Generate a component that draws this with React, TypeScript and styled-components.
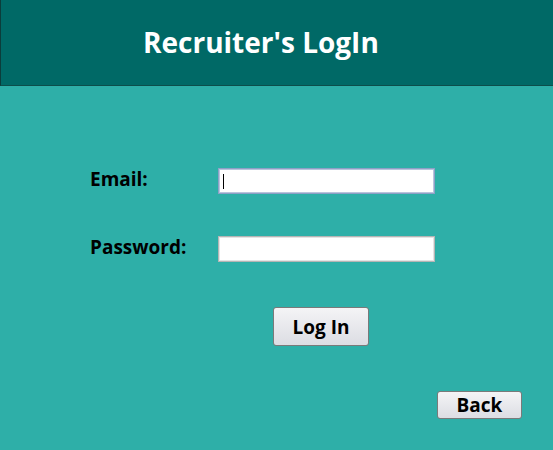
import React from "react";
import styled, { createGlobalStyle } from "styled-components";

const Global = createGlobalStyle`
  html, body { margin: 0; padding: 0; }
  body { background: #2eafa8; font-family: "Open Sans", "Liberation Sans", sans-serif; }
`;

const Page = styled.div`
  width: 553px;
  height: 450px;
  background: #2eafa8;
  display: flex;
  flex-direction: column;
  overflow: hidden;
`;

const Header = styled.header`
  background: #006966;
  border-left: 1px solid #0b3d3b;
  border-bottom: 1px solid #0d4e4b;
  box-sizing: border-box;
  height: 86px;
  display: flex;
  align-items: center;
  padding-left: 142px;
  padding-bottom: 1px;
`;

const Title = styled.h1`
  margin: 0;
  color: #ffffff;
  font-family: "Open Sans", sans-serif;
  font-weight: 700;
  font-size: 28px;
`;

const Form = styled.div`
  display: grid;
  grid-template-columns: 128px 217px;
  row-gap: 42px;
  padding: 82px 0 0 90px;
  align-items: center;
`;

const Label = styled.label`
  font-family: "Open Sans", sans-serif;
  font-weight: 700;
  font-size: 19px;
  line-height: 26px;
  margin-top: -4px;
  color: #000;
`;

const Field = styled.div<{ $focused?: boolean }>`
  width: 217px;
  height: 26px;
  box-sizing: border-box;
  border: 1px solid ${(p) => (p.$focused ? "#8da0c6" : "#b5b5b5")};
  box-shadow: inset 0 0 0 1px ${(p) => (p.$focused ? "#b9c4dc" : "#e4e4e4")};
  background: #fff;
`;

const Caret = styled.span`
  display: block;
  width: 1px;
  height: 15px;
  background: #000;
  margin-top: 5px;
  margin-left: 4px;
`;

const Button = styled.button<{ $w: number; $h: number }>`
  width: ${(p) => p.$w}px;
  height: ${(p) => p.$h}px;
  border: 1px solid #7a7a7a;
  border-radius: 3px;
  background: linear-gradient(#f4f4f6, #dcdde3);
  font-family: "Open Sans", sans-serif;
  font-weight: 700;
  font-size: 19px;
  color: #000;
  padding: 0;
  cursor: pointer;
`;

const LoginRow = styled.div`
  display: flex;
  padding: 45px 0 0 273px;
`;

const BackRow = styled.div`
  display: flex;
  padding: 45px 0 0 437px;
`;

export default function App() {
  return (
    <>
      <Global />
      <Page>
        <Header>
          <Title>Recruiter's LogIn</Title>
        </Header>
        <Form>
          <Label>Email:</Label>
          <Field $focused>
            <Caret />
          </Field>
          <Label>Password:</Label>
          <Field />
        </Form>
        <LoginRow>
          <Button $w={96} $h={39}>Log In</Button>
        </LoginRow>
        <BackRow>
          <Button $w={85} $h={28}>Back</Button>
        </BackRow>
      </Page>
    </>
  );
}
